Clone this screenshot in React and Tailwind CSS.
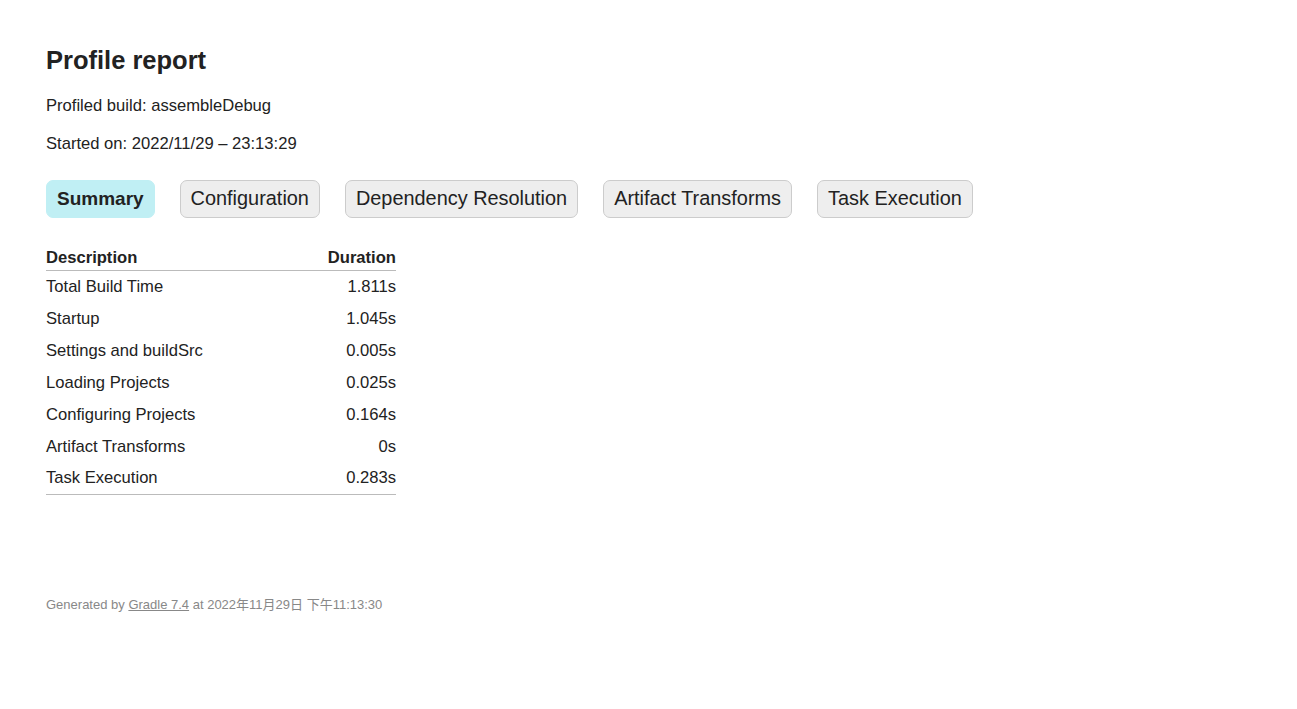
export default function App() {
  const rows = [
    ["Total Build Time", "1.811s"],
    ["Startup", "1.045s"],
    ["Settings and buildSrc", "0.005s"],
    ["Loading Projects", "0.025s"],
    ["Configuring Projects", "0.164s"],
    ["Artifact Transforms", "0s"],
    ["Task Execution", "0.283s"],
  ];
  const tabs = ["Summary", "Configuration", "Dependency Resolution", "Artifact Transforms", "Task Execution"];
  return (
    <div className="min-h-[709px] bg-white text-[#222] px-[46px] pt-[44px]" style={{ fontFamily: '"Liberation Sans", "Noto Sans CJK SC", sans-serif' }}>
      <h1 className="text-[25.5px] font-bold leading-[32px] text-[#222]">Profile report</h1>
      <p className="mt-[20px] text-[16.6px] leading-[20px]">Profiled build: assembleDebug</p>
      <p className="mt-[18px] text-[16.6px] leading-[20px]">Started on: 2022/11/29 – 23:13:29</p>
      <div className="mt-[26px] flex gap-[25px]">
        {tabs.map((t, i) => (
          <div
            key={t}
            className={
              "h-[38px] px-[10px] flex items-center rounded-[7px] border " +
              (i === 0 ? "bg-[#c0eff4] border-[#c0eff4] font-bold text-[19px] text-[#222]" : "bg-[#eeeeee] border-[#cccccc] text-[19.9px] text-[#222]")
            }
          >
            {t}
          </div>
        ))}
      </div>
      <table className="mt-[30px] w-[350px] border-collapse text-[16.6px]">
        <thead>
          <tr className="border-b border-[#bbb]">
            <th className="text-left font-bold pb-[2px] leading-[20px]">Description</th>
            <th className="text-right font-bold pb-[2px] leading-[20px]">Duration</th>
          </tr>
        </thead>
        <tbody className="border-b border-[#bbb]">
          {rows.map(([a, b]) => (
            <tr key={a}>
              <td className="text-left h-[32px] leading-[20px]">{a}</td>
              <td className="text-right h-[32px] leading-[20px]">{b}</td>
            </tr>
          ))}
        </tbody>
      </table>
      <p className="mt-[100px] text-[13px] text-[#888]">
        Generated by <span className="underline">Gradle 7.4</span> at 2022年11月29日 下午11:13:30
      </p>
    </div>
  );
}
